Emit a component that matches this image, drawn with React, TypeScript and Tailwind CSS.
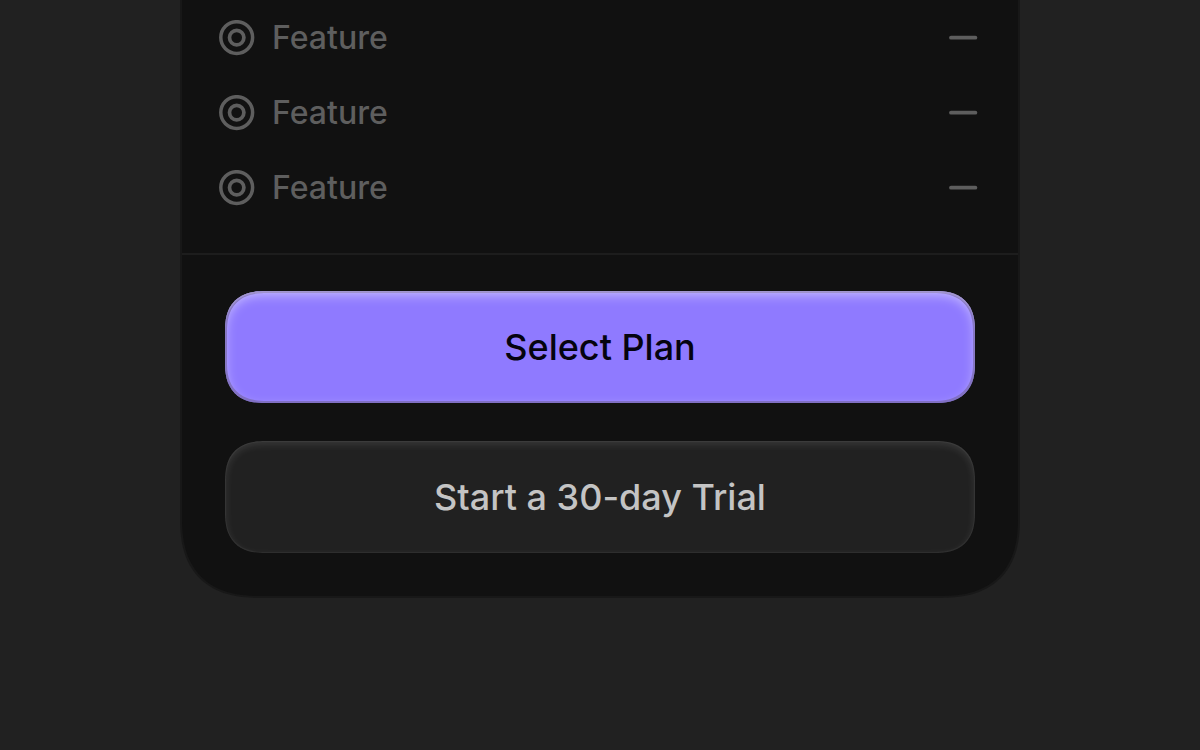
import clsx from "clsx";

const features = [
  { id: 1, name: "Feature" },
  { id: 2, name: "Feature" },
  { id: 3, name: "Feature" },
];

const TargetIcon = () => (
  <svg
    className="size-9"
    viewBox="0 0 36 36"
    fill="none"
    stroke="currentColor"
    aria-hidden="true"
  >
    <circle cx="17.7" cy="17.6" r="15.9" strokeWidth="3.5" />
    <circle cx="17.7" cy="17.6" r="7.2" strokeWidth="3.7" />
  </svg>
);

const DashIcon = () => (
  <svg
    className="size-9"
    viewBox="0 0 36 36"
    fill="none"
    stroke="currentColor"
    strokeWidth="3.8"
    strokeLinecap="round"
    aria-hidden="true"
  >
    <path d="M6 17.7h24.4" />
  </svg>
);

const PlanButton: React.FC<{
  primary?: boolean;
  children: React.ReactNode;
}> = ({ primary, children }) => {
  return (
    <button
      type="button"
      className={clsx(
        "h-28 w-full rounded-[40px] text-4xl font-medium [corner-shape:superellipse(1.3)]",
        primary
          ? "bg-[#8f7aff] text-[#05030f] shadow-[inset_0_2px_1px_rgba(255,255,255,0.2),inset_0_0_0_2px_rgba(115,100,165,0.65),inset_0_4px_12px_rgba(255,255,255,0.5)]"
          : "bg-[#212121] text-[#c4c4c4] shadow-[inset_0_0_0_1px_rgba(255,255,255,0.04),inset_0_3px_8px_rgba(255,255,255,0.12)]"
      )}
    >
      {children}
    </button>
  );
};

export default function App() {
  return (
    <main className="min-h-screen bg-[#212121] font-['Inter',sans-serif]">
      <section className="mx-auto w-full max-w-[840px] rounded-b-[80px] border-x-2 border-b-2 border-[#181818] bg-[#111111] [corner-shape:superellipse(1.3)]">
        <ul className="px-[37px] pb-7 text-[#5e5e5e]">
          {features.map((feature) => (
            <li key={feature.id} className="flex h-[75px] items-center gap-[17px]">
              <TargetIcon />
              <span className="grow pt-px text-[32px] font-medium">
                {feature.name}
              </span>
              <DashIcon />
            </li>
          ))}
        </ul>
        <div className="flex flex-col gap-[38px] border-t-2 border-[#1d1d1d] px-[43px] pt-9 pb-[43px]">
          <PlanButton primary>Select Plan</PlanButton>
          <PlanButton>Start a 30-day Trial</PlanButton>
        </div>
      </section>
    </main>
  );
}
